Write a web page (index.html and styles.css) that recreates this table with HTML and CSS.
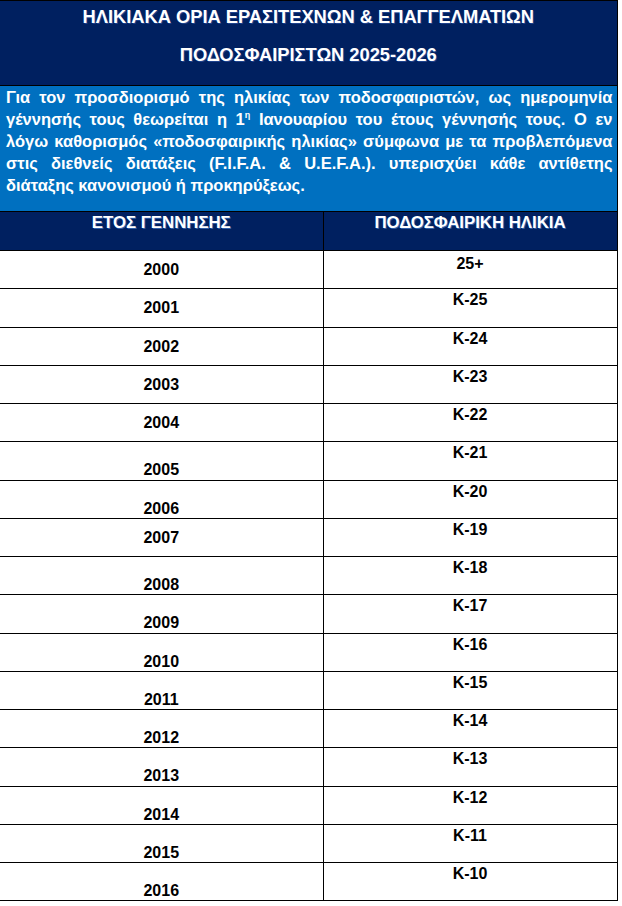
FILE: index.html
```html
<!DOCTYPE html>
<html lang="el">
<head>
<meta charset="utf-8">
<title>Ηλικιακά όρια ποδοσφαιριστών 2025-2026</title>
<link rel="stylesheet" href="styles.css">
</head>
<body>
<table class="ages">
  <colgroup><col class="c-year"><col class="c-age"></colgroup>
  <tr>
    <td colspan="2" class="title">
      <div class="title-line">ΗΛΙΚΙΑΚΑ ΟΡΙΑ ΕΡΑΣΙΤΕΧΝΩΝ &amp; ΕΠΑΓΓΕΛΜΑΤΙΩΝ</div>
      <div class="title-line second">ΠΟΔΟΣΦΑΙΡΙΣΤΩΝ 2025-2026</div>
    </td>
  </tr>
  <tr>
    <td colspan="2" class="note">Για τον προσδιορισμό της ηλικίας των ποδοσφαιριστών, ως ημερομηνία γέννησής τους θεωρείται η 1<sup>η</sup> Ιανουαρίου του έτους γέννησής τους. Ο εν λόγω καθορισμός «ποδοσφαιρικής ηλικίας» σύμφωνα με τα προβλεπόμενα στις διεθνείς διατάξεις (F.I.F.A. &amp; U.E.F.A.). υπερισχύει κάθε αντίθετης διάταξης κανονισμού ή προκηρύξεως.</td>
  </tr>
  <tr class="head">
    <th>ΕΤΟΣ ΓΕΝΝΗΣΗΣ</th>
    <th>ΠΟΔΟΣΦΑΙΡΙΚΗ ΗΛΙΚΙΑ</th>
  </tr>
  <tr><td class="year">2000</td><td class="age first">25+</td></tr>
  <tr><td class="year">2001</td><td class="age">Κ-25</td></tr>
  <tr><td class="year">2002</td><td class="age">Κ-24</td></tr>
  <tr><td class="year">2003</td><td class="age">Κ-23</td></tr>
  <tr><td class="year">2004</td><td class="age">Κ-22</td></tr>
  <tr><td class="year low">2005</td><td class="age">Κ-21</td></tr>
  <tr><td class="year low">2006</td><td class="age">Κ-20</td></tr>
  <tr><td class="year">2007</td><td class="age">Κ-19</td></tr>
  <tr><td class="year low">2008</td><td class="age">Κ-18</td></tr>
  <tr><td class="year low">2009</td><td class="age">Κ-17</td></tr>
  <tr><td class="year low">2010</td><td class="age">Κ-16</td></tr>
  <tr><td class="year low">2011</td><td class="age">Κ-15</td></tr>
  <tr><td class="year low">2012</td><td class="age">Κ-14</td></tr>
  <tr><td class="year low">2013</td><td class="age">Κ-13</td></tr>
  <tr><td class="year low">2014</td><td class="age">Κ-12</td></tr>
  <tr><td class="year low">2015</td><td class="age">Κ-11</td></tr>
  <tr><td class="year low">2016</td><td class="age">Κ-10</td></tr>
</table>
</body>
</html>
```

FILE: styles.css
```css
html, body {
  margin: 0;
  padding: 0;
  background: #ffffff;
}

body {
  font-family: "Liberation Sans", Arial, sans-serif;
  font-weight: bold;
  color: #000000;
}

.ages {
  border-collapse: collapse;
  width: 617px;
  table-layout: fixed;
}

.c-year { width: 323px; }
.c-age { width: 294px; }

.ages td, .ages th {
  border: 1px solid #000000;
  padding: 0;
  vertical-align: top;
  text-align: center;
}

.ages tr > :first-child { border-left: none; }

.ages td.title {
  background: #002060;
  color: #ffffff;
  height: 85px;
  box-sizing: border-box;
  font-size: 18.3px;
  padding-top: 5px;
  text-shadow: 1px 1px 0 rgba(70, 110, 200, 0.45);
}

.title-line {
  line-height: 22px;
}

.title-line.second {
  margin-top: 16px;
}

.ages td.note {
  background: #0070c0;
  color: #ffffff;
  font-size: 16.5px;
  line-height: 22px;
  text-align: justify;
  padding: 0 4px 15px 6px;
  height: 126px;
  box-sizing: border-box;
}

.note sup {
  font-size: 9px;
  line-height: 0;
  vertical-align: 7px;
}

.head th {
  background: #002060;
  color: #ffffff;
  font-size: 16.8px;
  line-height: 18px;
  height: 39px;
  padding-top: 2px;
  box-sizing: border-box;
  text-shadow: 1px 1px 0 rgba(90, 150, 230, 0.55);
}

.ages td.year, .ages td.age {
  height: 38.25px;
  box-sizing: border-box;
  font-size: 16px;
  line-height: 18px;
}

.ages td.year { padding-top: 10px; }
.ages td.year.low { padding-top: 19px; }
.ages td.age { padding-top: 2px; }
.ages td.age.first { padding-top: 4px; }
```
